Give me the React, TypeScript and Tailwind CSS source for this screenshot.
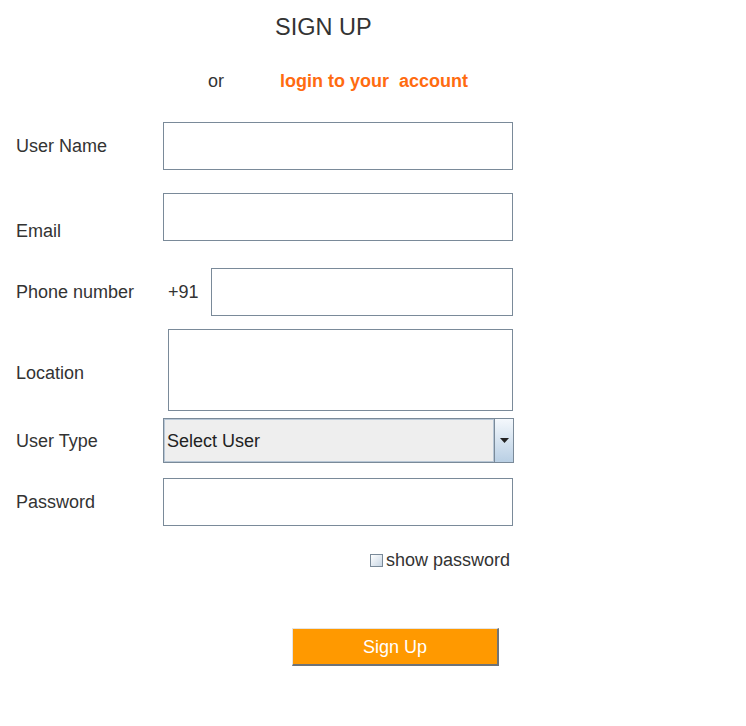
export default function App() {
  const label = "w-[147px] shrink-0 text-[18px] leading-[18px] text-[#333333]"
  const field = "border border-[#7a8a99] bg-white"
  return (
    <div className="w-[746px] h-[726px] bg-white font-['Liberation_Sans',Arial,sans-serif] text-[#333333]">
      <div className="flex h-[56px] items-center pl-[275px] text-[23.5px] leading-none">SIGN UP</div>

      <div className="flex h-[50px] items-center text-[18px] leading-none">
        <span className="ml-[208px]">or</span>
        <span className="ml-[56px] font-bold text-[#ff6b10]">login to your&nbsp; account</span>
      </div>

      <div className="flex flex-col pl-4">
        <div className="mt-4 flex h-[48px] items-center">
          <span className={label}>User Name</span>
          <div className={`${field} h-[48px] w-[350px]`} />
        </div>

        <div className="mt-[23px] flex h-[48px] items-start">
          <span className={`${label} mt-[29px]`}>Email</span>
          <div className={`${field} h-[48px] w-[350px]`} />
        </div>

        <div className="mt-[27px] flex h-[48px] items-center">
          <span className="w-[152px] shrink-0 text-[18px] leading-[18px]">Phone number</span>
          <span className="w-[43px] shrink-0 text-[18px] leading-[18px]">+91</span>
          <div className={`${field} h-[48px] w-[302px]`} />
        </div>

        <div className="mt-[13px] flex h-[82px] items-start">
          <span className="mt-[35px] w-[152px] shrink-0 text-[18px] leading-[18px]">Location</span>
          <div className={`${field} h-[82px] w-[345px]`} />
        </div>

        <div className="mt-[7px] flex h-[45px] items-center">
          <span className={label}>User Type</span>
          <div className="flex h-[45px] w-[351px] border border-[#7a8a99] bg-[#eeeeee]">
            <div className="flex flex-1 items-center border border-[#b8c7d6] pl-[2px] text-[18px] leading-none text-[#222222]">
              Select User
            </div>
            <div className="flex w-[19px] items-center justify-center border-l border-[#7a8a99] bg-gradient-to-b from-[#f4f8fc] to-[#b9cfe4]">
              <svg width="9" height="5" viewBox="0 0 9 5">
                <path d="M0 0h9L4.5 5z" fill="#222" />
              </svg>
            </div>
          </div>
        </div>

        <div className="mt-[15px] flex h-[48px] items-center">
          <span className={label}>Password</span>
          <div className={`${field} h-[48px] w-[350px]`} />
        </div>

        <div className="mt-[25px] flex h-[18px] items-center pl-[354px]">
          <div className="h-[13px] w-[13px] border border-[#7a8a99] bg-gradient-to-br from-[#ffffff] to-[#c8d6e4]" />
          <span className="ml-[3px] text-[18px] leading-none">show password</span>
        </div>

        <div className="mt-[59px] pl-[276px]">
          <button className="flex h-[38px] w-[207px] items-center justify-center border-t border-l border-b-2 border-r-2 border-t-[#e4e4e4] border-l-[#e4e4e4] border-b-[#6e7378] border-r-[#6e7378] bg-[#ff9900] text-[18px] leading-none text-white">
            Sign Up
          </button>
        </div>
      </div>
    </div>
  )
}
